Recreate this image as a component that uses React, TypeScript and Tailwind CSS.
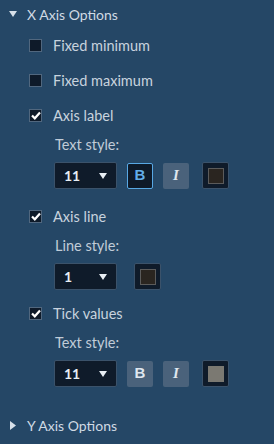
const font = { fontFamily: 'Lato, "Open Sans", sans-serif' }

function Caret({ dir }: { dir: 'down' | 'right' }) {
  return dir === 'down' ? (
    <svg width="8" height="6" viewBox="0 0 8 6" className="fill-[#d7e0e9]">
      <path d="M0 0h8L4 6z" />
    </svg>
  ) : (
    <svg width="6" height="9" viewBox="0 0 6 9" className="fill-[#d7e0e9]">
      <path d="M0 0l6 4.5L0 9z" />
    </svg>
  )
}

function Section({ label, open }: { label: string; open: boolean }) {
  return (
    <div className="flex items-center h-[28px] pl-[9px] gap-[10px] text-[14px] text-[#d0dae4]">
      <div className="w-[8px] flex justify-center">
        <Caret dir={open ? 'down' : 'right'} />
      </div>
      {label}
    </div>
  )
}

function CheckRow({ label, checked, className = '' }: { label: string; checked: boolean; className?: string }) {
  return (
    <div className={`flex items-center h-[35px] pl-[29px] gap-[11px] text-[14.5px] text-[#c8d3de] ${className}`}>
      <div className="w-[13px] h-[13px] bg-[#0e1a29] border border-[#51677e] flex items-center justify-center">
        {checked && (
          <svg width="10" height="9" viewBox="0 0 10 9" fill="none" stroke="white" strokeWidth="2.2">
            <path d="M1 4.5l2.8 2.8L9 1.5" />
          </svg>
        )}
      </div>
      {label}
    </div>
  )
}

function SubLabel({ text }: { text: string }) {
  return <div className="h-[24px] flex items-center pl-[55px] text-[14.5px] text-[#c0ccd8]">{text}</div>
}

function Select({ value }: { value: string }) {
  return (
    <div className="w-[63px] h-[27px] bg-[#0f1b2a] border border-[#3b526a] rounded-[2px] flex items-center justify-between pl-[9px] pr-[9px] text-[14px] font-bold text-[#e8eef4]">
      <span>{value}</span>
      <svg width="8" height="6" viewBox="0 0 8 6" className="fill-[#e8eef4]">
        <path d="M0 0h8L4 6z" />
      </svg>
    </div>
  )
}

function StyleBtn({ kind, active }: { kind: 'B' | 'I'; active?: boolean }) {
  return (
    <div
      className={`w-[26px] h-[26px] rounded-[2px] flex items-center justify-center text-[15px] font-bold ${
        active ? 'bg-[#0e1a29] border border-[#58a8e4] text-[#62aeea]' : 'bg-[#4a627b] text-[#dfe7ef]'
      }`}
      style={{ fontFamily: '"Liberation Sans", Arial, sans-serif' }}
    >
      {kind === 'B' ? 'B' : <span className="italic font-serif" style={{ fontFamily: '"Liberation Serif", serif' }}>I</span>}
    </div>
  )
}

function Swatch({ color, border }: { color: string; border?: boolean }) {
  return (
    <div className="w-[27px] h-[27px] bg-[#0f1b2a] border border-[#3b526a] rounded-[2px] flex items-center justify-center">
      <div
        className={`w-[16px] h-[16px] ${border ? 'border border-[#5b5b5b]' : ''}`}
        style={{ backgroundColor: color }}
      />
    </div>
  )
}

export default function App() {
  return (
    <div className="w-[274px] h-[444px] bg-[#254766] overflow-hidden" style={font}>
      <Section label="X Axis Options" open />
      <CheckRow label="Fixed minimum" checked={false} />
      <CheckRow label="Fixed maximum" checked={false} />
      <CheckRow label="Axis label" checked />
      <SubLabel text="Text style:" />
      <div className="flex items-center mt-[5px] pl-[54px]">
        <Select value="11" />
        <div className="ml-[10px]"><StyleBtn kind="B" active /></div>
        <div className="ml-[10px]"><StyleBtn kind="I" /></div>
        <div className="ml-[13px]"><Swatch color="#2a2520" border /></div>
      </div>
      <CheckRow label="Axis line" checked className="mt-[10px]" />
      <SubLabel text="Line style:" />
      <div className="flex items-center mt-[5px] pl-[54px]">
        <Select value="1" />
        <div className="ml-[17px]"><Swatch color="#2a2520" border /></div>
      </div>
      <CheckRow label="Tick values" checked className="mt-[6px]" />
      <SubLabel text="Text style:" />
      <div className="flex items-center mt-[5px] pl-[54px]">
        <Select value="11" />
        <div className="ml-[10px]"><StyleBtn kind="B" /></div>
        <div className="ml-[10px]"><StyleBtn kind="I" /></div>
        <div className="ml-[13px]"><Swatch color="#7b7972" /></div>
      </div>
      <div className="mt-[24px]">
        <Section label="Y Axis Options" open={false} />
      </div>
    </div>
  )
}
